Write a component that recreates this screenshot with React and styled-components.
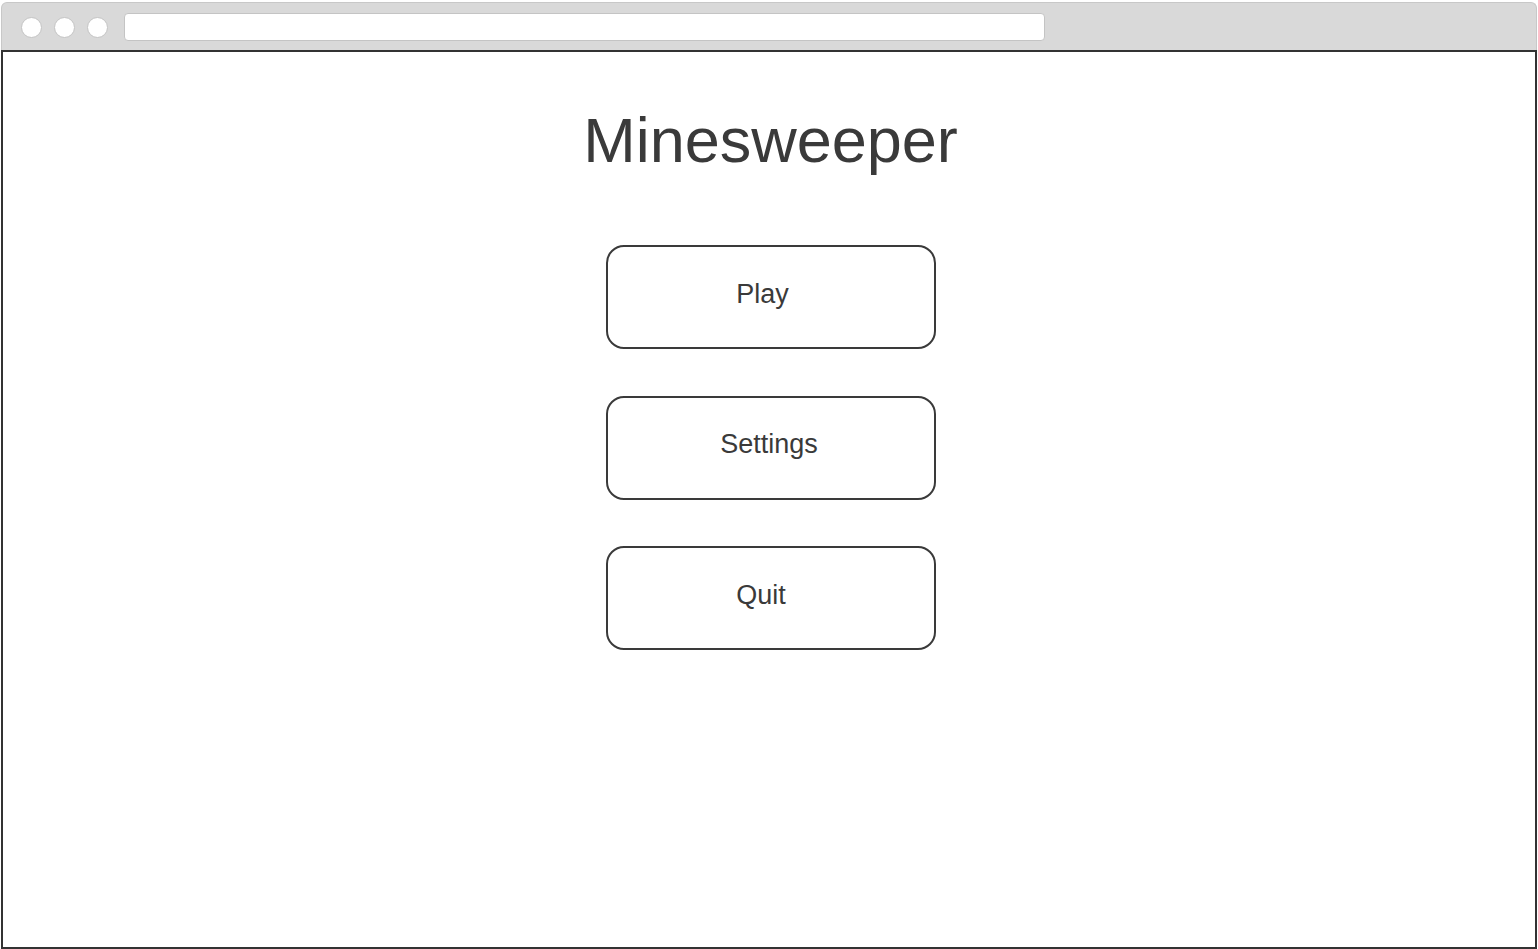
import React from 'react';
import styled, { createGlobalStyle } from 'styled-components';

const GlobalStyle = createGlobalStyle`
  html, body {
    margin: 0;
    padding: 0;
    background: #ffffff;
    font-family: "Liberation Sans", Arial, sans-serif;
  }
`;

const Window = styled.div`
  display: flex;
  flex-direction: column;
  width: 1536px;
  height: 947px;
  margin: 2px 0 0 1px;
`;

const TitleBar = styled.div`
  display: flex;
  align-items: center;
  gap: 12px;
  box-sizing: border-box;
  height: 48px;
  padding: 1px 0 0 19px;
  background: #d9d9d9;
  border: 1px solid #c8c8c8;
  border-bottom: none;
  border-radius: 6px 6px 0 0;
`;

const Dot = styled.span`
  width: 19px;
  height: 19px;
  border-radius: 50%;
  background: #ffffff;
  border: 1px solid #c4c4c4;
  flex: none;
`;

const AddressBar = styled.div`
  box-sizing: border-box;
  width: 921px;
  height: 28px;
  margin-left: 4px;
  background: #ffffff;
  border: 1px solid #c4c4c4;
  border-radius: 4px;
`;

const Content = styled.div`
  flex: 1;
  display: flex;
  flex-direction: column;
  align-items: center;
  padding: 52px 0 0 3px;
  background: #ffffff;
  border: 2px solid #333333;
`;

const Title = styled.h1`
  margin: 0 0 69px;
  font-size: 63px;
  font-weight: normal;
  color: #3a3a3a;
  line-height: normal;
`;

const Menu = styled.div`
  display: flex;
  flex-direction: column;
  gap: 46.5px;
`;

const MenuButton = styled.button`
  display: flex;
  align-items: center;
  justify-content: center;
  box-sizing: border-box;
  width: 330px;
  height: 104px;
  padding: 0 ${(p) => p.$shift || 0}px 6px 0;
  background: #ffffff;
  border: 2px solid #3a3a3a;
  border-radius: 18px;
  font-family: "Liberation Sans", Arial, sans-serif;
  font-size: 27px;
  color: #3a3a3a;
  cursor: pointer;
`;

export default function App() {
  return (
    <>
      <GlobalStyle />
      <Window>
        <TitleBar>
          <Dot />
          <Dot />
          <Dot />
          <AddressBar />
        </TitleBar>
        <Content>
          <Title>Minesweeper</Title>
          <Menu>
            <MenuButton $shift={16}>Play</MenuButton>
            <MenuButton $shift={3}>Settings</MenuButton>
            <MenuButton $shift={19}>Quit</MenuButton>
          </Menu>
        </Content>
      </Window>
    </>
  );
}
